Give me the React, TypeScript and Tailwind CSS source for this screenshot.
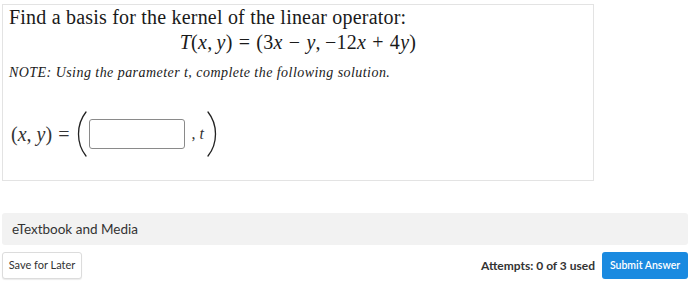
import React from 'react'

const serif = { fontFamily: '"Liberation Serif", "DejaVu Serif", serif' }

function BigParen({ side }: { side: 'left' | 'right' }) {
  const d =
    side === 'left'
      ? 'M9 1 C3 8.5 1.5 16 1.5 23 C1.5 30 3 37.5 9 45'
      : 'M1 1 C7 8.5 8.5 16 8.5 23 C8.5 30 7 37.5 1 45'
  return (
    <svg width="10" height="46" viewBox="0 0 10 46" className="shrink-0">
      <path d={d} fill="none" stroke="#222" strokeWidth="1.3" strokeLinecap="round" />
    </svg>
  )
}

function I({ children }: { children: React.ReactNode }) {
  return <span className="italic">{children}</span>
}

function Op({ children }: { children: React.ReactNode }) {
  return <span className="mx-[6px]">{children}</span>
}

export default function App() {
  return (
    <div className="h-[290px] w-[700px] overflow-hidden bg-white text-[#222]">
      <div className="ml-[2px] mt-[4px] h-[177px] w-[592px] border border-[#e3e3e3] pl-[6px]" style={serif}>
        <p className="pt-[1px] text-[20px] leading-[22px] tracking-[0.2px] text-[#1a1a1a]">
          Find a basis for the kernel of the linear operator:
        </p>
        <p className="mt-[3px] pr-[6px] text-center text-[20px] leading-[22px] tracking-[0.3px] text-[#1a1a1a]">
          <I>T</I>(<I>x</I>,<span className="ml-[4px]" />
          <I>y</I>)<Op>=</Op>(3<I>x</I>
          <Op>−</Op>
          <I>y</I>,<span className="ml-[4px]" />
          −12<I>x</I>
          <Op>+</Op>4<I>y</I>)
        </p>
        <p className="mt-[12px] text-[14px] italic leading-[16px] tracking-[0.45px] text-[#1a1a1a]">
          NOTE: Using the parameter t, complete the following solution.
        </p>
        <div className="mt-[30px] flex items-center pl-[2px] text-[20px] text-[#333]">
          <span className="mr-[8px]">
            (<I>x</I>, <I>y</I>)<span className="ml-[6px]">=</span>
          </span>
          <BigParen side="left" />
          <div className="ml-[2px] h-[30px] w-[96px] rounded-[3px] border border-[#8a8a8a] bg-white" />
          <span className="ml-[6px] mr-[3px] text-[16px]">
            , <I>t</I>
          </span>
          <BigParen side="right" />
        </div>
      </div>

      <div
        className="ml-[2px] mt-[32px] flex h-[32px] w-[686px] items-center rounded-[3px] bg-[#f2f2f2] pl-[10px] text-[13.5px] text-[#333]"
        style={{ fontFamily: 'Lato, "Open Sans", sans-serif' }}
      >
        eTextbook and Media
      </div>

      <div
        className="ml-[2px] mt-[7px] flex w-[686px] items-center justify-between"
        style={{ fontFamily: 'Lato, "Open Sans", sans-serif' }}
      >
        <button className="h-[27px] w-[80px] rounded-[3px] border border-[#dcdcdc] bg-white text-[11px] text-[#333] shadow-[0_1px_1px_rgba(0,0,0,0.08)]">
          Save for Later
        </button>
        <div className="flex items-center gap-[7px]">
          <span className="text-[12px] font-bold text-[#333]">Attempts: 0 of 3 used</span>
          <button className="h-[27px] w-[86px] rounded-[3px] bg-[#1a8ae0] text-[10.5px] font-semibold text-white">
            Submit Answer
          </button>
        </div>
      </div>
    </div>
  )
}
